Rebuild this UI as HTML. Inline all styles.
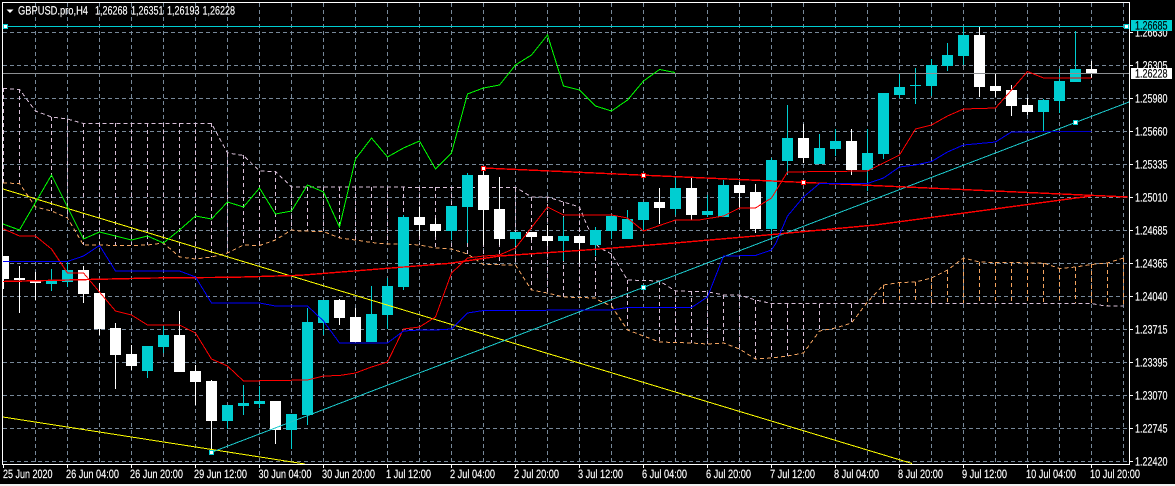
<!DOCTYPE html>
<html><head><meta charset="utf-8"><style>
html,body{margin:0;padding:0;background:#000;width:1175px;height:486px;overflow:hidden}
svg{display:block}
text{font-family:"Liberation Sans",sans-serif;font-size:12px;fill:#fff;stroke:#fff;stroke-width:.15px;text-rendering:geometricPrecision}
text.k{fill:#000;stroke:#000}
</style></head><body>
<svg width="1175" height="486" viewBox="0 0 1175 486" xmlns="http://www.w3.org/2000/svg">
<rect width="1175" height="486" fill="#000"/>
<rect y="484" width="1175" height="2" fill="#f0f0f0"/>
<defs><clipPath id="c"><rect x="3" y="3" width="1126" height="461"/></clipPath></defs>
<g clip-path="url(#c)" fill="none" shape-rendering="crispEdges">
<!-- grid -->
<path stroke="#778899" stroke-dasharray="4 3" d="M3 32.5H1129M3 65.5H1129M3 98.5H1129M3 131.5H1129M3 164.5H1129M3 197.5H1129M3 230.5H1129M3 263.5H1129M3 296.5H1129M3 329.5H1129M3 362.5H1129M3 395.5H1129M3 428.5H1129M3 461.5H1129"/>
<path stroke="#778899" stroke-dasharray="4 3" d="M35.5 3V464M67.5 3V464M99.5 3V464M131.5 3V464M163.5 3V464M195.5 3V464M227.5 3V464M259.5 3V464M291.5 3V464M323.5 3V464M355.5 3V464M387.5 3V464M419.5 3V464M451.5 3V464M483.5 3V464M515.5 3V464M547.5 3V464M579.5 3V464M611.5 3V464M643.5 3V464M675.5 3V464M707.5 3V464M739.5 3V464M771.5 3V464M803.5 3V464M835.5 3V464M867.5 3V464M899.5 3V464M931.5 3V464M963.5 3V464M995.5 3V464M1027.5 3V464M1059.5 3V464M1091.5 3V464M1123.5 3V464"/>
<!-- cloud hatch -->
<path stroke="#D8BFD8" stroke-dasharray="4 3" d="M3.5 88V183M19.5 89V183M51.5 117V211M67.5 119V218M83.5 123V245M99.5 123V245M115.5 123V245M131.5 123V245M147.5 123V245M163.5 123V243M179.5 123V257M195.5 123V259M211.5 123V257M227.5 153V253M243.5 155V245M259.5 171V245M275.5 171V240M291.5 187V230M307.5 187V231M323.5 187V231M339.5 187V238M355.5 187V240M371.5 187V242M387.5 187V244M403.5 187V244M419.5 187V245M435.5 187V248M451.5 187V249M467.5 187V254M483.5 187V264M499.5 187V265M515.5 188V265M531.5 197V290M547.5 197V293M563.5 202V297M579.5 207V298M595.5 243V298M611.5 254V306M627.5 280V330M659.5 281V342M675.5 291V343M691.5 291V343M707.5 292V344M723.5 295V343M739.5 295V349M755.5 300V359M771.5 304V358M787.5 304V356M803.5 304V353M819.5 304V331M851.5 304V323"/>
<path stroke="#F4A460" stroke-dasharray="4 3" d="M883.5 285V303M899.5 282V303M915.5 282V303M931.5 278V303M947.5 270V303M963.5 258V303M979.5 262V303M995.5 262V303M1011.5 262V303M1027.5 262V303M1043.5 263V303M1059.5 268V303M1075.5 267V303M1091.5 264V303M1107.5 263V306M1123.5 258V306"/>
<!-- cloud edges -->
<path stroke="#D8BFD8" stroke-dasharray="4 3" d="M3 88.5L19.5 89.5L35.5 111L51.5 117L67.5 119L83.5 123.5L211.5 123.5L227.5 153L243.5 155.5L259.5 171L275.5 171.5L291.5 187L516 187.5L531.5 197L547.5 197L563.5 202L579.5 207L586 223L595 243L600 248L611.5 254L627.5 280L659.5 281L675.5 291L707.5 291.7L723.5 295L739.5 295L755.5 300L771.5 303.5L1091.5 303.5L1105 306L1123.5 306"/>
<path stroke="#F4A460" stroke-dasharray="4 3" d="M3 183L19.5 183.5L35.5 207L51.5 211L67.5 218L83.5 245L131.5 245.5L147.5 245L163.5 243L179.5 257L195.5 259L211.5 257L227.5 253L243.5 245L259.5 245.5L275.5 240L291.5 230L300 231L323.5 231.5L339.5 238L355.5 240L371.5 242.5L387.5 244L403.5 244L419.5 245L435.5 248L451.5 249L467.5 254L483.5 264.5L515.5 265L531.5 290L547.5 293L563.5 297L595.5 298L600 301L611.5 306L627.5 330L643.5 336L659.5 342L691.5 343L707.5 344L723.5 343L739.5 349L755.5 359L771.5 358L787.5 356L803.5 353L819.5 331L835.5 328L851.5 323L867.5 302L883.5 285L899.5 282.5L915.5 282L931.5 278L947.5 270L963.5 258L979.5 262L995.5 262.5L1043.5 263L1059.5 268.5L1075.5 267L1091.5 264.5L1107.5 263L1123.5 258"/>
<!-- wicks -->
<path stroke="#00CED1" d="M51.5 269V291M67.5 262V287M147.5 346V378M163.5 326V353M227.5 405V429M243.5 385V415M259.5 386V408M291.5 414V449M307.5 308V425M323.5 300V335M371.5 286V342M387.5 278V329M403.5 215V290M451.5 206V240M467.5 173V243M515.5 232V246M563.5 217V261M595.5 227V256M611.5 215V239M627.5 210V239M643.5 202V230M675.5 177V215M707.5 195V217M723.5 180V217M771.5 158V240M787.5 105V175M819.5 134V164M835.5 129V156M867.5 129V191M883.5 93V159M899.5 74V98M915.5 68V104M931.5 59V96M947.5 43V71M963.5 27V65M1043.5 99V131M1059.5 69V113M1075.5 31V82"/>
<path stroke="#fff" d="M3.5 256V289M19.5 266V313M35.5 272V300M83.5 266V303M99.5 283V335M115.5 323V389M131.5 345V370M179.5 311V372M195.5 365V405M211.5 380V450M275.5 401V444M339.5 299V325M355.5 308V342M419.5 207V236M435.5 218V237M483.5 168V245M499.5 177V245M531.5 232V240M547.5 225V246M579.5 236V263M659.5 188V224M691.5 178V220M739.5 182V208M755.5 184V233M803.5 124V163M851.5 129V175M979.5 27V97M995.5 73V97M1011.5 85V116M1027.5 98V115M1091.5 61V78"/>
<!-- bodies -->
<path stroke="none" fill="#00CED1" d="M46 281h11v3H46zM62 270h11v12H62zM142 346h11v25h-11zM158 335h11v12h-11zM222 405h11v16h-11zM238 403h11v3h-11zM254 401h11v3h-11zM286 414h11v16h-11zM302 322h11v93h-11zM318 300h11v23h-11zM366 314h11v28h-11zM382 286h11v29h-11zM398 217h11v70h-11zM446 206h11v25h-11zM462 175h11v32h-11zM510 232h11v7h-11zM558 236h11v5h-11zM590 230h11v15h-11zM606 216h11v15h-11zM622 219h11v20h-11zM638 202h11v18h-11zM670 188h11v21h-11zM702 211h11v4h-11zM718 185h11v32h-11zM766 160h11v69h-11zM782 138h11v23h-11zM814 148h11v16h-11zM830 141h11v8h-11zM862 153h11v17h-11zM878 93h11v61h-11zM894 87h11v8h-11zM910 85h11v1h-11zM926 65h11v21h-11zM942 55h11v11h-11zM958 35h11v21h-11zM1038 100h11v12h-11zM1054 81h11v20h-11zM1070 69h11v13h-11z"/>
<path stroke="none" fill="#fff" d="M3 256h6v23H3zM14 278h11v2H14zM30 281h11v2H30zM78 270h11v24H78zM94 293h11v36H94zM110 328h11v27h-11zM126 354h11v12h-11zM174 335h11v37h-11zM190 371h11v11h-11zM206 381h11v40h-11zM270 401h11v29h-11zM334 300h11v18h-11zM350 317h11v25h-11zM414 217h11v8h-11zM430 224h11v7h-11zM478 175h11v35h-11zM494 209h11v30h-11zM526 232h11v5h-11zM542 236h11v5h-11zM574 236h11v7h-11zM654 202h11v6h-11zM686 188h11v27h-11zM734 185h11v8h-11zM750 192h11v37h-11zM798 138h11v20h-11zM846 141h11v29h-11zM974 35h11v52h-11zM990 86h11v5h-11zM1006 90h11v16h-11zM1022 105h11v7h-11zM1086 69h11v5h-11z"/>
<!-- horizontal lines -->
<path stroke="#8c8f92" d="M3 73.5H1129"/>
<path stroke="#00CED1" d="M3 26.5H1129"/>
<!-- yellow -->
<path stroke="#ffff00" d="M3 189L912 463.5M3 417L305 464"/>
<!-- cyan trend -->
<path stroke="#1cc9cc" d="M211.5 452.3L1129 102"/>
<!-- red thick trends -->
<path stroke="#ff0000" stroke-width="1.4" d="M483.5 168L1128 197"/>
<path stroke="#ff0000" stroke-width="1.4" d="M3 281.5L153 278L233 277.3L300 275.3L450 263.3L500 256L600 249L683 242.3L767 235L875 225L1091 196"/>
<!-- green -->
<path stroke="#00ff00" d="M3 224L19.5 230L51.5 175L83.5 239L99.5 232L131.5 240L147.5 236L163.5 243L179.5 230L195.5 216L211.5 219L227.5 202L243.5 207L259.5 188L275.5 214L291.5 211L307.5 185L323.5 192L339.5 227L355.5 159L371.5 138L387.5 157L403.5 148L419.5 141L435.5 169L451.5 153L467.5 94L483.5 88L499.5 85L515.5 65L531.5 55L547.5 35L563.5 86L579.5 90L595.5 106L611.5 111L627.5 100L643.5 81L659.5 69.5L675 72.5"/>
<!-- tenkan -->
<path stroke="#ff0000" d="M3 228.7L19.5 236L35.5 236L51.5 249L67.5 273L83.5 273L99.5 292L115.5 311L131.5 315L147.5 325L179.5 325L195.5 333L211.5 359L227.5 366L243.5 381L307.5 380L323.5 376L339.5 375.5L355.5 373L371.5 367L387.5 362L403.5 329L419.5 327L435.5 317L451.5 273L467.5 258L483.5 256L499.5 255L515.5 248L547.5 207L563.5 215L611.5 215L627.5 218L643.5 231L675.5 220L699 220L723.5 216L739.5 208L755.5 208L771.5 198L787.5 172L867.5 171L883.5 163L899.5 155L915.5 129L931.5 125L947.5 116L963.5 109L995.5 108L1011.5 90L1027.5 71.5L1043.5 78L1091.5 78"/>
<!-- kijun -->
<path stroke="#0000ff" d="M3 261.5L67.5 261.5L83.5 256L99.5 245.5L115.5 271L179.5 271L195.5 277L211.5 303L259.5 303L275.5 306L307.5 306L323.5 321L339.5 343L387.5 343L403.5 331L419.5 330L435.5 330L451.5 329L467.5 313L483.5 310.5L611.5 310L627.5 307.5L691.5 307.5L707.5 297L723.5 256L755.5 255.5L771.5 250L776 243L787.5 216L803.5 197L819.5 183.5L867.5 183.5L883.5 178L899.5 167L915.5 165L931.5 161.5L947.5 152L963.5 145L979.5 143.5L995.5 142L1011.5 132L1035 132"/>
<path stroke="#0000cc" d="M1035 131.5H1091.5"/>
<!-- markers -->
<g stroke="none">
<path fill="#00CED1" d="M3 24h5v5H3zM1124 24h5v5h-5zM209 450h5v5h-5zM641 285h5v5h-5zM1073 120h5v5h-5z"/>
<path fill="#ff0000" d="M481 166h5v5h-5zM641 173h5v5h-5zM801 180h5v5h-5z"/>
<path fill="#fff" d="M4 25h3v3H4zM1125 25h3v3h-3zM210 451h3v3h-3zM642 286h3v3h-3zM1074 121h3v3h-3zM482 167h3v3h-3zM642 174h3v3h-3zM802 181h3v3h-3z"/>
</g>
</g>
<!-- frame -->
<g shape-rendering="crispEdges" fill="none" stroke="#fff">
<path d="M2.5 2V465M2 2.5H1130M1129.5 2V465M2 464.5H1130"/>
<path d="M1129 32.5h4M1129 65.5h4M1129 98.5h4M1129 131.5h4M1129 164.5h4M1129 197.5h4M1129 230.5h4M1129 263.5h4M1129 296.5h4M1129 329.5h4M1129 362.5h4M1129 395.5h4M1129 428.5h4M1129 461.5h4"/>
<path d="M3.5 464v4M67.5 464v4M131.5 464v4M195.5 464v4M259.5 464v4M323.5 464v4M387.5 464v4M451.5 464v4M515.5 464v4M579.5 464v4M643.5 464v4M707.5 464v4M771.5 464v4M835.5 464v4M899.5 464v4M963.5 464v4M1027.5 464v4M1091.5 464v4"/>
</g>
<!-- header -->
<path d="M6.5 9.5H13.5L10 13Z" fill="#fff"/>
<text x="18" y="14.5" textLength="70" lengthAdjust="spacingAndGlyphs">GBPUSD.pro,H4</text>
<text x="95" y="14.5" textLength="32.5" lengthAdjust="spacingAndGlyphs">1,26268</text>
<text x="131" y="14.5" textLength="32.5" lengthAdjust="spacingAndGlyphs">1,26351</text>
<text x="167" y="14.5" textLength="32.5" lengthAdjust="spacingAndGlyphs">1,26193</text>
<text x="202.5" y="14.5" textLength="32.5" lengthAdjust="spacingAndGlyphs">1,26228</text>
<!-- price axis -->
<text x="1135" y="36.5" textLength="32.5" lengthAdjust="spacingAndGlyphs">1.26630</text>
<text x="1135" y="69.5" textLength="32.5" lengthAdjust="spacingAndGlyphs">1.26305</text>
<text x="1135" y="102.5" textLength="32.5" lengthAdjust="spacingAndGlyphs">1.25980</text>
<text x="1135" y="135.5" textLength="32.5" lengthAdjust="spacingAndGlyphs">1.25660</text>
<text x="1135" y="168.5" textLength="32.5" lengthAdjust="spacingAndGlyphs">1.25335</text>
<text x="1135" y="201.5" textLength="32.5" lengthAdjust="spacingAndGlyphs">1.25010</text>
<text x="1135" y="234.5" textLength="32.5" lengthAdjust="spacingAndGlyphs">1.24685</text>
<text x="1135" y="267.5" textLength="32.5" lengthAdjust="spacingAndGlyphs">1.24365</text>
<text x="1135" y="300.5" textLength="32.5" lengthAdjust="spacingAndGlyphs">1.24040</text>
<text x="1135" y="333.5" textLength="32.5" lengthAdjust="spacingAndGlyphs">1.23715</text>
<text x="1135" y="366.5" textLength="32.5" lengthAdjust="spacingAndGlyphs">1.23395</text>
<text x="1135" y="399.5" textLength="32.5" lengthAdjust="spacingAndGlyphs">1.23070</text>
<text x="1135" y="432.5" textLength="32.5" lengthAdjust="spacingAndGlyphs">1.22745</text>
<text x="1135" y="465.5" textLength="32.5" lengthAdjust="spacingAndGlyphs">1.22420</text>
<rect x="1131" y="20" width="41" height="11" fill="#00CED1"/>
<text class="k" x="1135" y="29.5" textLength="32.5" lengthAdjust="spacingAndGlyphs">1.26685</text>
<rect x="1131" y="68" width="41" height="11" fill="#fff"/>
<text class="k" x="1135" y="77.5" textLength="32.5" lengthAdjust="spacingAndGlyphs">1.26228</text>
<!-- time axis -->
<text x="3" y="478" textLength="49.5" lengthAdjust="spacingAndGlyphs">25 Jun 2020</text>
<text x="66" y="478" textLength="53" lengthAdjust="spacingAndGlyphs">26 Jun 04:00</text>
<text x="130" y="478" textLength="53" lengthAdjust="spacingAndGlyphs">26 Jun 20:00</text>
<text x="194" y="478" textLength="53" lengthAdjust="spacingAndGlyphs">29 Jun 12:00</text>
<text x="258.5" y="478" textLength="53" lengthAdjust="spacingAndGlyphs">30 Jun 04:00</text>
<text x="322" y="478" textLength="53" lengthAdjust="spacingAndGlyphs">30 Jun 20:00</text>
<text x="386" y="478" textLength="45" lengthAdjust="spacingAndGlyphs">1 Jul 12:00</text>
<text x="450" y="478" textLength="45" lengthAdjust="spacingAndGlyphs">2 Jul 04:00</text>
<text x="514" y="478" textLength="45" lengthAdjust="spacingAndGlyphs">2 Jul 20:00</text>
<text x="578" y="478" textLength="45" lengthAdjust="spacingAndGlyphs">3 Jul 12:00</text>
<text x="642" y="478" textLength="45" lengthAdjust="spacingAndGlyphs">6 Jul 04:00</text>
<text x="706" y="478" textLength="45" lengthAdjust="spacingAndGlyphs">6 Jul 20:00</text>
<text x="770" y="478" textLength="45" lengthAdjust="spacingAndGlyphs">7 Jul 12:00</text>
<text x="834" y="478" textLength="45" lengthAdjust="spacingAndGlyphs">8 Jul 04:00</text>
<text x="898" y="478" textLength="45" lengthAdjust="spacingAndGlyphs">8 Jul 20:00</text>
<text x="962" y="478" textLength="45" lengthAdjust="spacingAndGlyphs">9 Jul 12:00</text>
<text x="1026" y="478" textLength="50" lengthAdjust="spacingAndGlyphs">10 Jul 04:00</text>
<text x="1090" y="478" textLength="50" lengthAdjust="spacingAndGlyphs">10 Jul 20:00</text>
</svg>
</body></html>
